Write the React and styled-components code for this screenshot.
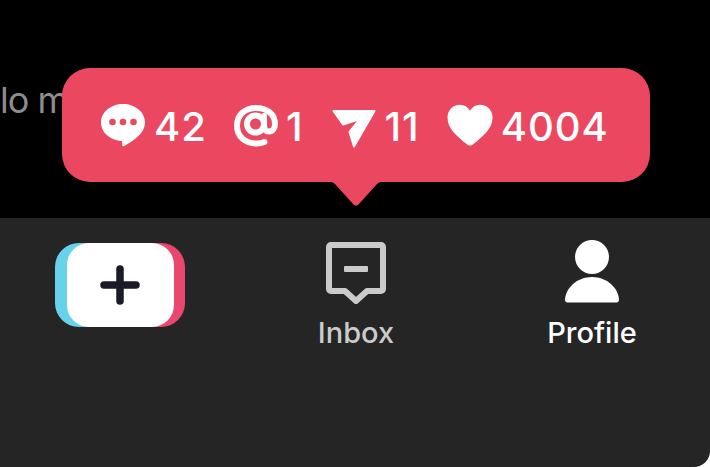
import styled, { createGlobalStyle } from "styled-components";

const GlobalStyle = createGlobalStyle`
  html, body {
    margin: 0;
    padding: 0;
    background: #fff;
  }
  body {
    font-family: Inter, "Liberation Sans", sans-serif;
  }
`;

const Screen = styled.div`
  position: relative;
  width: 710px;
  height: 467px;
  overflow: hidden;
`;

const Feed = styled.div`
  height: 218px;
  box-sizing: border-box;
  padding-top: 77px;
  background: #000;
`;

const Caption = styled.p`
  margin: 0;
  font-size: 36px;
  line-height: 46px;
  letter-spacing: -1px;
  color: #8d8d8d;
  white-space: nowrap;
`;

const TabBar = styled.nav`
  display: grid;
  grid-template-columns: repeat(3, 1fr);
  height: 249px;
  box-sizing: border-box;
  padding-left: 2px;
  background: #252525;
  border-bottom-right-radius: 16px;
`;

const Tab = styled.div`
  display: flex;
  flex-direction: column;
  align-items: center;
  padding-top: ${(p) => p.$top}px;
  color: ${(p) => p.$color};
`;

const TabLabel = styled.span`
  margin-top: ${(p) => p.$gap}px;
  font-size: 29px;
  font-weight: 500;
  line-height: 34px;
`;

const AddButton = styled.div`
  display: flex;
  align-items: center;
  justify-content: center;
  width: 130px;
  height: 84px;
  border-radius: 24px;
  background: linear-gradient(90deg, #67d3ea 0 50%, #e9476d 50% 100%);
`;

const AddFace = styled.div`
  display: flex;
  align-items: center;
  justify-content: center;
  width: 107px;
  height: 84px;
  border-radius: 22px;
  background: #fff;
`;

const Bubble = styled.div`
  position: absolute;
  left: 62px;
  top: 68px;
  display: flex;
  align-items: center;
  gap: 28px;
  width: 588px;
  height: 114px;
  box-sizing: border-box;
  padding-left: 38px;
  border-radius: 28px;
  background: #ec4760;
  color: #fff;
`;

const Tail = styled.svg`
  position: absolute;
  left: 264px;
  top: 113px;
`;

const Stat = styled.div`
  display: flex;
  align-items: center;
  gap: 8px;
`;

const Count = styled.span`
  margin: 4px -1px 0 0;
  font-size: 40px;
  font-weight: 500;
  line-height: 46px;
  letter-spacing: 1px;
`;

const CommentIcon = () => (
  <svg width="46" height="44" viewBox="0 0 46 44">
    <path
      fill="#fff"
      d="M23 1C10.8 1 1 9.2 1 19.5 1 29.6 10.5 37.6 22 37.9L22.2 42.2C22.3 43.2 23.3 43.6 24.1 43.1 31.5 38.8 45 31 45 19.5 45 9.2 35.2 1 23 1Z"
    />
    <circle cx="12.5" cy="19" r="3.3" fill="#ec4760" />
    <circle cx="23" cy="19" r="3.3" fill="#ec4760" />
    <circle cx="33.5" cy="19" r="3.3" fill="#ec4760" />
  </svg>
);

const AtIcon = () => (
  <svg width="44" height="46" viewBox="0 0 44 46" fill="none" stroke="#fff" strokeWidth="6" strokeLinecap="round">
    <circle cx="21.5" cy="22" r="8.5" />
    <path d="M30 14V24C30 28 32 29.5 35 29.5 38.5 29.5 41 26.5 41 22 41 11.5 32.5 6 22 6 11 6 3 13 3 23.5 3 35 11.5 41.5 22.5 41.5 25.5 41.5 28 41 30.5 40" />
  </svg>
);

const PlaneIcon = () => (
  <svg width="46" height="46" viewBox="0 0 46 46">
    <path
      fill="#fff"
      stroke="#fff"
      strokeWidth="2"
      strokeLinejoin="round"
      d="M2.5 9H43.5L23 44.5 18.5 30 29 17 12 22.5Z"
    />
  </svg>
);

const HeartIcon = () => (
  <svg width="46" height="42" viewBox="0 0 46 42">
    <path
      fill="#fff"
      d="M23 41.5C21.8 41.5 20.8 41 19.8 40.2 9.5 32 0.5 24.5 0.5 13.5 0.5 6 6 0.8 13 0.8 17.2 0.8 20.8 3 23 6.8 25.2 3 28.8 0.8 33 0.8 40 0.8 45.5 6 45.5 13.5 45.5 24.5 36.5 32 26.2 40.2 25.2 41 24.2 41.5 23 41.5Z"
    />
  </svg>
);

const PlusIcon = () => (
  <svg width="40" height="40" viewBox="0 0 40 40" fill="none" stroke="#1a1a28" strokeWidth="7.5" strokeLinecap="round">
    <path d="M20 4V36M4 20H36" />
  </svg>
);

const InboxIcon = () => (
  <svg width="60" height="62" viewBox="0 0 60 62" fill="none">
    <path
      stroke="#cbcbcb"
      strokeWidth="6"
      strokeLinejoin="round"
      d="M5 3H55C56.2 3 57 3.8 57 5V47C57 48.2 56.2 49 55 49H41L30 59 19 49H5C3.8 49 3 48.2 3 47V5C3 3.8 3.8 3 5 3Z"
    />
    <rect x="18" y="24" width="24" height="6" rx="1" fill="#cbcbcb" />
  </svg>
);

const ProfileIcon = () => (
  <svg width="56" height="64" viewBox="0 0 56 64">
    <circle cx="28" cy="18" r="17" fill="#fff" />
    <path
      fill="#fff"
      d="M28 38C13 38 1.5 49 1 61 1 62.4 2 63.4 3.5 63.4H52.5C54 63.4 55 62.4 55 61 54.5 49 43 38 28 38Z"
    />
  </svg>
);

export default function App() {
  return (
    <>
      <GlobalStyle />
      <Screen>
        <Feed>
          <Caption>lo m</Caption>
        </Feed>
        <TabBar>
          <Tab $top={25} $color="#fff">
            <AddButton>
              <AddFace>
                <PlusIcon />
              </AddFace>
            </AddButton>
          </Tab>
          <Tab $top={24} $color="#cbcbcb">
            <InboxIcon />
            <TabLabel $gap={12}>Inbox</TabLabel>
          </Tab>
          <Tab $top={21} $color="#fff">
            <ProfileIcon />
            <TabLabel $gap={13}>Profile</TabLabel>
          </Tab>
        </TabBar>
        <Bubble>
          <Stat>
            <CommentIcon />
            <Count>42</Count>
          </Stat>
          <Stat>
            <AtIcon />
            <Count>1</Count>
          </Stat>
          <Stat>
            <PlaneIcon />
            <Count>11</Count>
          </Stat>
          <Stat>
            <HeartIcon />
            <Count>4004</Count>
          </Stat>
          <Tail width="60" height="26" viewBox="0 0 60 26">
            <path
              fill="#ec4760"
              d="M0 0C4 0 7 1 9 3L27.5 23.5C28.8 25 31.2 25 32.5 23.5L51 3C53 1 56 0 60 0Z"
            />
          </Tail>
        </Bubble>
      </Screen>
    </>
  );
}
